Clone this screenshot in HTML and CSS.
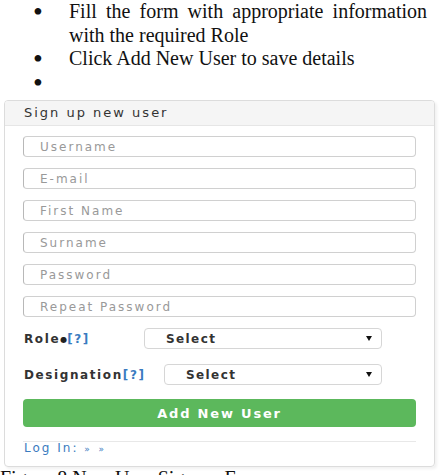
FILE: index.html
```html
<!DOCTYPE html>
<html>
<head>
  <meta charset="utf-8">
  <meta name="viewport" content="width=device-width, initial-scale=1">
  <title>New User Sign up</title>
  <link rel="stylesheet" href="styles.css">
</head>
<body>
  <ul class="steps">
    <li>Fill the form with appropriate information with the required Role</li>
    <li>Click Add New User to save details</li>
    <li></li>
  </ul>

  <div class="panel">
    <div class="panel-heading">Sign up new user</div>
    <form class="panel-body" action="#">
      <input type="text" name="username" placeholder="Username">
      <input type="text" name="email" placeholder="E-mail">
      <input type="text" name="first_name" placeholder="First Name">
      <input type="text" name="surname" placeholder="Surname">
      <input type="password" name="password" placeholder="Password">
      <input type="password" name="password2" placeholder="Repeat Password">

      <div class="field-row">
        <label>Role<span class="req">&#9679;</span><a class="help" href="#">[?]</a></label>
        <div class="select select-role"><span>Select</span><i class="caret"></i></div>
      </div>
      <div class="field-row">
        <label>Designation<a class="help" href="#">[?]</a></label>
        <div class="select select-designation"><span>Select</span><i class="caret"></i></div>
      </div>

      <button type="button" class="btn-add">Add New User</button>
      <div class="panel-footer">
        <a href="#">Log In: <span class="arrows">&raquo; &raquo;</span></a>
      </div>
    </form>
  </div>

  <p class="caption">Figure 8 New User Sign up Form</p>
</body>
</html>
```

FILE: styles.css
```css
body {
  margin: 0;
  font-family: "Liberation Serif", "Times New Roman", serif;
  color: #111;
  background: #fff;
}
.steps {
  margin: 0;
  padding: 0 18px 0 0;
  list-style: none;
  font-size: 20px;
  line-height: 23.5px;
}
.steps li {
  display: flex;
  text-align: justify;
  min-height: 23.5px;
}
.steps li::before {
  content: "\2022";
  flex: 0 0 69px;
  box-sizing: border-box;
  padding-left: 33px;
  font-size: 28px;
  line-height: 23.5px;
}

.panel {
  box-sizing: border-box;
  width: 431px;
  margin: 6px 0 0 4px;
  border: 1px solid #dcdcdc;
  border-radius: 4px;
  box-shadow: 2px 2px 3px rgba(0, 0, 0, 0.06);
  font-family: "DejaVu Sans", Verdana, sans-serif;
  font-size: 12px;
  letter-spacing: 2px;
  color: #333;
}
.panel-heading {
  height: 24px;
  line-height: 24px;
  padding-left: 19px;
  background: #f5f5f5;
  border-bottom: 1px solid #e6e6e6;
  border-radius: 3px 3px 0 0;
  font-size: 13px;
  letter-spacing: 2px;
  color: #333;
}
.panel-body {
  display: flex;
  flex-direction: column;
  padding: 10px 18px 10px 18px;
  margin: 0;
}
.panel-body input {
  box-sizing: border-box;
  height: 21px;
  margin: 0 0 11px;
  padding: 0 0 0 16px;
  border: 1px solid #d0d0d0;
  border-left-color: #b8b8b8;
  border-radius: 4px;
  font-family: inherit;
  font-size: 12px;
  letter-spacing: 2px;
  color: #555;
}
.panel-body input::placeholder {
  color: #999;
}

.field-row {
  display: flex;
  align-items: center;
  margin: 0 34px 0 1px;
  font-weight: bold;
  letter-spacing: 1.6px;
}
.field-row + .field-row {
  margin-top: 15px;
}
.field-row label {
  color: #333;
}
.req {
  font-size: 8px;
  letter-spacing: 0;
  vertical-align: 1px;
  color: #222;
}
.help {
  color: #3a7bc0;
  text-decoration: none;
}
.select {
  display: flex;
  align-items: center;
  box-sizing: border-box;
  height: 21px;
  margin-left: auto;
  padding: 0 9px 0 21px;
  border: 1px solid #d6d6d6;
  border-radius: 4px;
  color: #333;
  letter-spacing: 1.4px;
}
.select-role {
  width: 238px;
}
.select-designation {
  width: 218px;
}
.caret {
  margin-left: auto;
  border-top: 5px solid #111;
  border-left: 3.5px solid transparent;
  border-right: 3.5px solid transparent;
}

.btn-add {
  height: 28px;
  margin: 14px 0 0;
  border: none;
  border-radius: 4px;
  background: #5cb85c;
  color: #fff;
  font-family: inherit;
  font-size: 13px;
  font-weight: bold;
  letter-spacing: 1.8px;
  cursor: pointer;
}
.panel-footer {
  margin-top: 14px;
  padding-top: 0;
  border-top: 1px solid #e8e8e8;
  line-height: 13px;
  font-size: 12px;
}
.panel-footer a {
  margin-left: 1px;
  color: #3a7bc0;
  text-decoration: none;
}
.arrows {
  font-size: 9px;
  letter-spacing: 3px;
}

.caption {
  margin: 0;
  font-size: 20px;
  line-height: 23.5px;
}
```
